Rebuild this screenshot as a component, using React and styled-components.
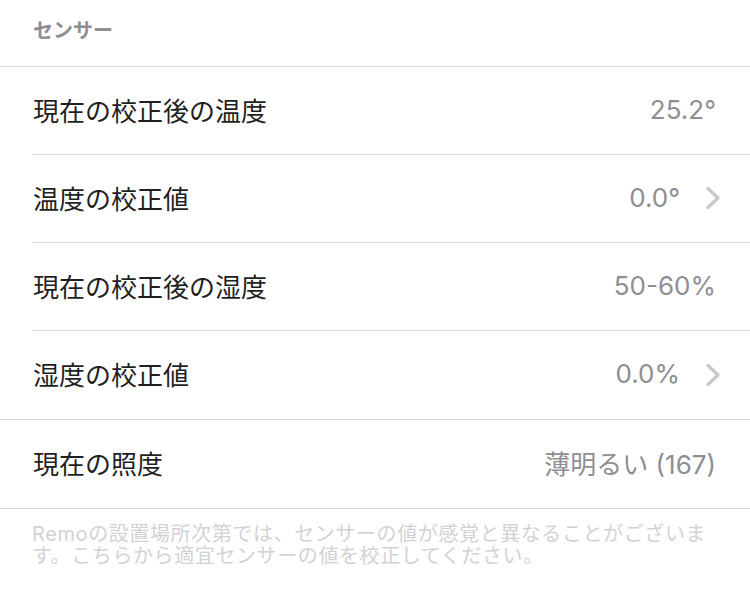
import styled, { createGlobalStyle } from 'styled-components';

const GlobalStyle = createGlobalStyle`
  html, body {
    margin: 0;
    padding: 0;
    background: #ffffff;
  }
  body {
    font-family: "Inter", "Noto Sans CJK JP", sans-serif;
    -webkit-font-smoothing: antialiased;
  }
`;

const Page = styled.div`
  width: 750px;
  min-height: 598px;
  background: #ffffff;
`;

const SectionHeader = styled.div`
  height: 67px;
  box-sizing: border-box;
  padding: 0 33px 8px;
  display: flex;
  align-items: center;
  font-size: 20px;
  font-weight: 600;
  color: #8e8e93;
  border-bottom: 1px solid #dadada;
`;

const Group = styled.div`
  border-bottom: 1px solid #dadada;
`;

const Row = styled.div`
  height: 88px;
  margin-left: 32px;
  padding: 0 34px 3px 0;
  box-sizing: border-box;
  display: flex;
  align-items: center;
  border-bottom: ${(p) => (p.last ? 'none' : '1px solid #dadada')};
`;

const Label = styled.span`
  flex: 1;
  font-size: 26px;
  color: #1f1f24;
  padding-left: 1px;
`;

const Value = styled.span`
  font-size: 26px;
  color: #8e8e93;
`;

const Chevron = styled.svg`
  width: 18px;
  height: 26px;
  margin: 2px -6px 0 24px;
  flex: none;
`;

const Footer = styled.p`
  margin: 0;
  padding: 14px 32px 0;
  font-size: 20px;
  line-height: 22px;
  color: #d2d2d6;
  letter-spacing: 0.6px;
`;

const ChevronIcon = () => (
  <Chevron viewBox="0 0 18 26">
    <path d="M4 3.5 L14 13 L4 22.5" fill="none" stroke="#c7c7cc" strokeWidth="3.2" strokeLinecap="round" strokeLinejoin="round" />
  </Chevron>
);

const calibration = [
  { label: '現在の校正後の温度', value: '25.2°' },
  { label: '温度の校正値', value: '0.0°', link: true },
  { label: '現在の校正後の湿度', value: '50-60%' },
  { label: '湿度の校正値', value: '0.0%', link: true },
];

const App = () => (
  <Page>
    <GlobalStyle />
    <SectionHeader>センサー</SectionHeader>
    <Group>
      {calibration.map((r, i) => (
        <Row key={r.label} last={i === calibration.length - 1}>
          <Label>{r.label}</Label>
          <Value>{r.value}</Value>
          {r.link && <ChevronIcon />}
        </Row>
      ))}
    </Group>
    <Group>
      <Row last>
        <Label>現在の照度</Label>
        <Value>薄明るい (167)</Value>
      </Row>
    </Group>
    <Footer>
      Remoの設置場所次第では、センサーの値が感覚と異なることがございます。こちらから適宜センサーの値を校正してください。
    </Footer>
  </Page>
);

export default App;
